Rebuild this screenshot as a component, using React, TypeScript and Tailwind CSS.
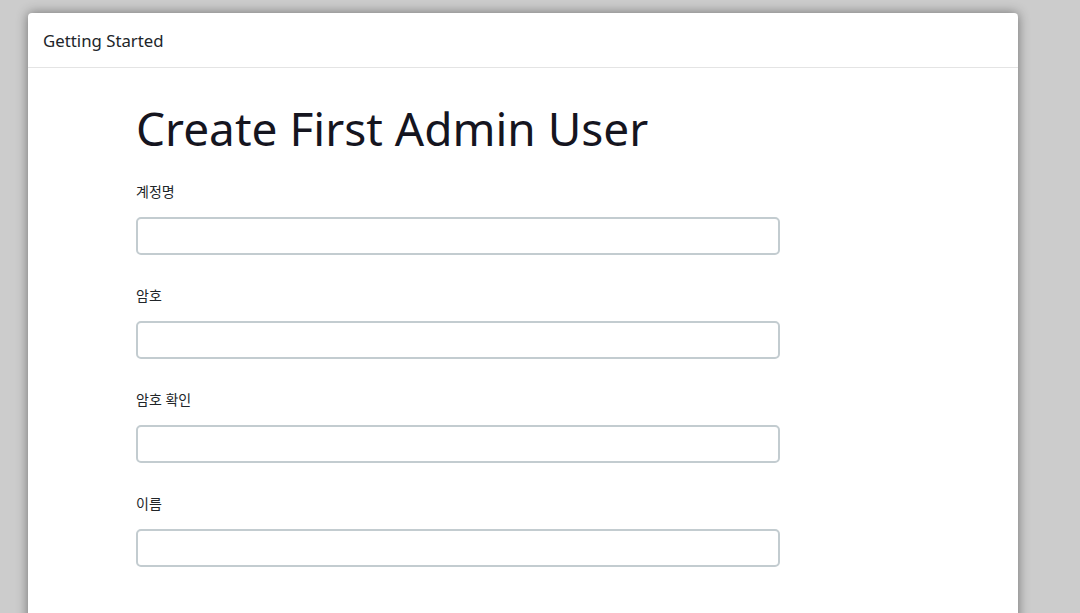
const fields = ['계정명', '암호', '암호 확인', '이름']

export default function App() {
  return (
    <div className="min-h-[613px] h-[613px] overflow-hidden bg-[#cccccc] pt-[13px] pl-[28px] font-['Noto_Sans','Noto_Sans_CJK_KR',sans-serif]">
      <div className="w-[990px] min-h-[620px] bg-white rounded-t-[4px] shadow-[0_0_12px_rgba(0,0,0,0.45)]">
        {/* Header */}
        <div className="h-[55px] border-b border-[#e4e4e4] px-[15px] pt-[2px] flex items-center">
          <span className="text-[16.8px] text-[#212529]">Getting Started</span>
        </div>

        {/* Body */}
        <div className="pl-[108px] pt-[30px]">
          <h1 className="text-[46px] leading-[60px] text-[#15151f] font-normal mb-[24px]">
            Create First Admin User
          </h1>
          <form className="w-[644px]">
            {fields.map((label) => (
              <div key={label} className="mb-[31px]">
                <label className="block text-[14px] leading-[20px] text-[#212529] mb-[15px]">{label}</label>
                <input
                  type={label.startsWith('암호') ? 'password' : 'text'}
                  className="block w-full h-[38px] border-2 border-[#c3ccd0] rounded-[5px] px-3 outline-none"
                />
              </div>
            ))}
          </form>
        </div>
      </div>
    </div>
  )
}
